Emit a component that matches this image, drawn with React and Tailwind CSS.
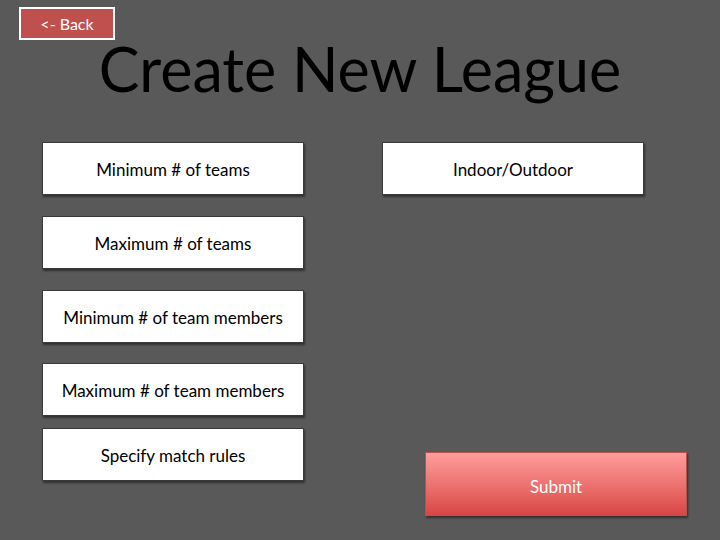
const leftItems = [
  { label: 'Minimum # of teams', gap: 'mt-0' },
  { label: 'Maximum # of teams', gap: 'mt-[21px]' },
  { label: 'Minimum # of team members', gap: 'mt-[21px]' },
  { label: 'Maximum # of team members', gap: 'mt-[20px]' },
  { label: 'Specify match rules', gap: 'mt-[12px]' },
];

const OptionBox = ({ label, className = '' }) => (
  <div
    className={`flex h-[53px] w-[262px] items-center justify-center border border-[#3a3a3a] bg-white pt-[2px] text-[17px] text-black shadow-[1px_2px_2px_rgba(0,0,0,0.45)] ${className}`}
  >
    {label}
  </div>
);

export default function App() {
  return (
    <div className="relative h-[540px] w-[720px] overflow-hidden bg-[#595959] font-['Lato',sans-serif]">
      <div className="pl-[19px] pt-[7px]">
        <button className="flex h-[33px] w-[96px] items-center justify-center border-2 border-white bg-[#c0504d] text-[16px] text-white">
          &lt;- Back
        </button>
      </div>

      <h1 className="-mt-[4px] text-center text-[61px] leading-[66px] text-black">
        Create New League
      </h1>

      <div className="mt-[40px] flex">
        <div className="ml-[42px] flex flex-col">
          {leftItems.map((item) => (
            <OptionBox key={item.label} label={item.label} className={item.gap} />
          ))}
        </div>

        <div className="ml-[78px] flex flex-col">
          <OptionBox label="Indoor/Outdoor" />
          <button className="ml-[43px] mt-[257px] flex h-[64px] w-[262px] items-center justify-center border border-[#b9514f] bg-gradient-to-b from-[#ff9d9b] to-[#d84546] pt-[5px] text-[17px] text-white shadow-[1px_2px_2px_rgba(0,0,0,0.45)]">
            Submit
          </button>
        </div>
      </div>
    </div>
  );
}
